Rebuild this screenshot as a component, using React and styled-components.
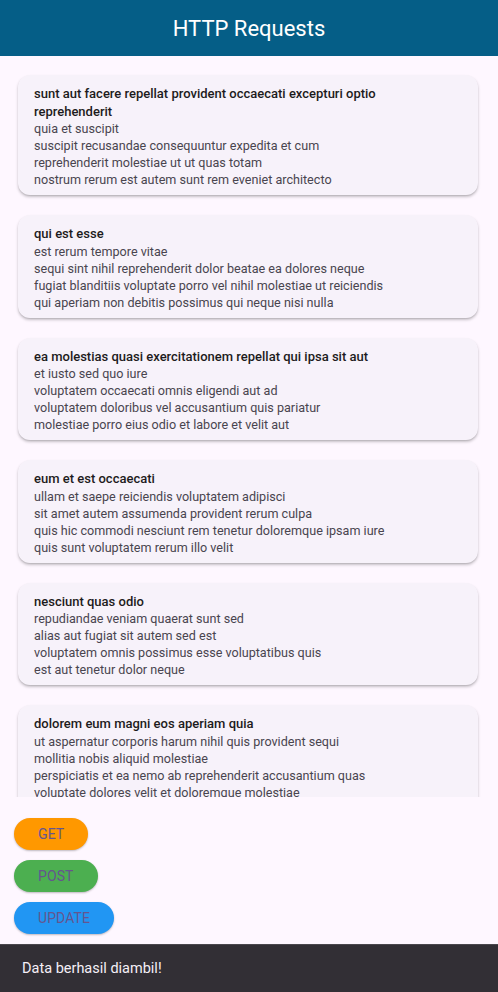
import React from 'react';
import styled, { createGlobalStyle } from 'styled-components';

const GlobalStyle = createGlobalStyle`
    html, body {
        margin: 0;
        padding: 0;
        background: #fef7ff;
        font-family: Roboto, "Noto Sans", sans-serif;
    }
`;

const posts = [
    {
        id: 1,
        title: 'sunt aut facere repellat provident occaecati excepturi optio reprehenderit',
        body: 'quia et suscipit\nsuscipit recusandae consequuntur expedita et cum\nreprehenderit molestiae ut ut quas totam\nnostrum rerum est autem sunt rem eveniet architecto',
    },
    {
        id: 2,
        title: 'qui est esse',
        body: 'est rerum tempore vitae\nsequi sint nihil reprehenderit dolor beatae ea dolores neque\nfugiat blanditiis voluptate porro vel nihil molestiae ut reiciendis\nqui aperiam non debitis possimus qui neque nisi nulla',
    },
    {
        id: 3,
        title: 'ea molestias quasi exercitationem repellat qui ipsa sit aut',
        body: 'et iusto sed quo iure\nvoluptatem occaecati omnis eligendi aut ad\nvoluptatem doloribus vel accusantium quis pariatur\nmolestiae porro eius odio et labore et velit aut',
    },
    {
        id: 4,
        title: 'eum et est occaecati',
        body: 'ullam et saepe reiciendis voluptatem adipisci\nsit amet autem assumenda provident rerum culpa\nquis hic commodi nesciunt rem tenetur doloremque ipsam iure\nquis sunt voluptatem rerum illo velit',
    },
    {
        id: 5,
        title: 'nesciunt quas odio',
        body: 'repudiandae veniam quaerat sunt sed\nalias aut fugiat sit autem sed est\nvoluptatem omnis possimus esse voluptatibus quis\nest aut tenetur dolor neque',
    },
    {
        id: 6,
        title: 'dolorem eum magni eos aperiam quia',
        body: 'ut aspernatur corporis harum nihil quis provident sequi\nmollitia nobis aliquid molestiae\nperspiciatis et ea nemo ab reprehenderit accusantium quas\nvoluptate dolores velit et doloremque molestiae',
    },
];

const actions = [
    { label: 'GET', color: '#ff9800' },
    { label: 'POST', color: '#4caf50' },
    { label: 'UPDATE', color: '#2196f3' },
    { label: 'DELETE', color: '#f44336' },
];

const Screen = styled.div`
    position: relative;
    height: 992px;
    display: flex;
    flex-direction: column;
    overflow: hidden;
    background: #fef7ff;
`;

const AppBar = styled.header`
    height: 56px;
    flex-shrink: 0;
    display: flex;
    align-items: center;
    justify-content: center;
    background: #055e87;
    color: #ffffff;
    font-size: 22px;
    font-weight: 400;
`;

const PostList = styled.div`
    flex: 1;
    overflow: hidden;
    padding-top: 19px;
    display: flex;
    flex-direction: column;
    gap: 20px;
`;

const PostCard = styled.div`
    flex-shrink: 0;
    margin: 0 20px 0 18px;
    padding: 10px 30px 7px 16px;
    background: #f7f2fa;
    border-radius: 12px;
    box-shadow: 0 2px 3px rgba(0, 0, 0, 0.22), 0 1px 1px rgba(0, 0, 0, 0.08);
`;

const PostTitle = styled.div`
    color: #1d1b20;
    font-size: 13px;
    font-weight: 500;
    line-height: 17.5px;
`;

const PostBody = styled.div`
    color: #49454f;
    font-size: 12.6px;
    line-height: 17px;
    white-space: pre-line;
`;

const ActionColumn = styled.div`
    flex-shrink: 0;
    display: flex;
    flex-direction: column;
    align-items: flex-start;
    gap: 10px;
    padding: 21px 14px 16px;
`;

const ActionButton = styled.button`
    height: 32px;
    padding: 0 24px;
    border: none;
    border-radius: 16px;
    background: ${(p) => p.$color};
    color: #65558f;
    font-family: Roboto, sans-serif;
    font-size: 14px;
    font-weight: 400;
    letter-spacing: 0.1px;
    box-shadow: 0 1px 2px rgba(0, 0, 0, 0.25);
    cursor: pointer;
`;

const SnackBar = styled.div`
    position: absolute;
    left: 0;
    right: 0;
    bottom: 0;
    height: 47px;
    display: flex;
    align-items: center;
    padding: 0 22px;
    background: #322f35;
    border-top: 1px solid #4a474d;
    color: #f5eff7;
    font-size: 14.5px;
`;

export default function App() {
    return (
        <>
            <GlobalStyle />
            <Screen>
                <AppBar>HTTP Requests</AppBar>
                <PostList>
                    {posts.map((post) => (
                        <PostCard key={post.id}>
                            <PostTitle>{post.title}</PostTitle>
                            <PostBody>{post.body}</PostBody>
                        </PostCard>
                    ))}
                </PostList>
                <ActionColumn>
                    {actions.map((action) => (
                        <ActionButton key={action.label} $color={action.color}>
                            {action.label}
                        </ActionButton>
                    ))}
                </ActionColumn>
                <SnackBar>Data berhasil diambil!</SnackBar>
            </Screen>
        </>
    );
}
